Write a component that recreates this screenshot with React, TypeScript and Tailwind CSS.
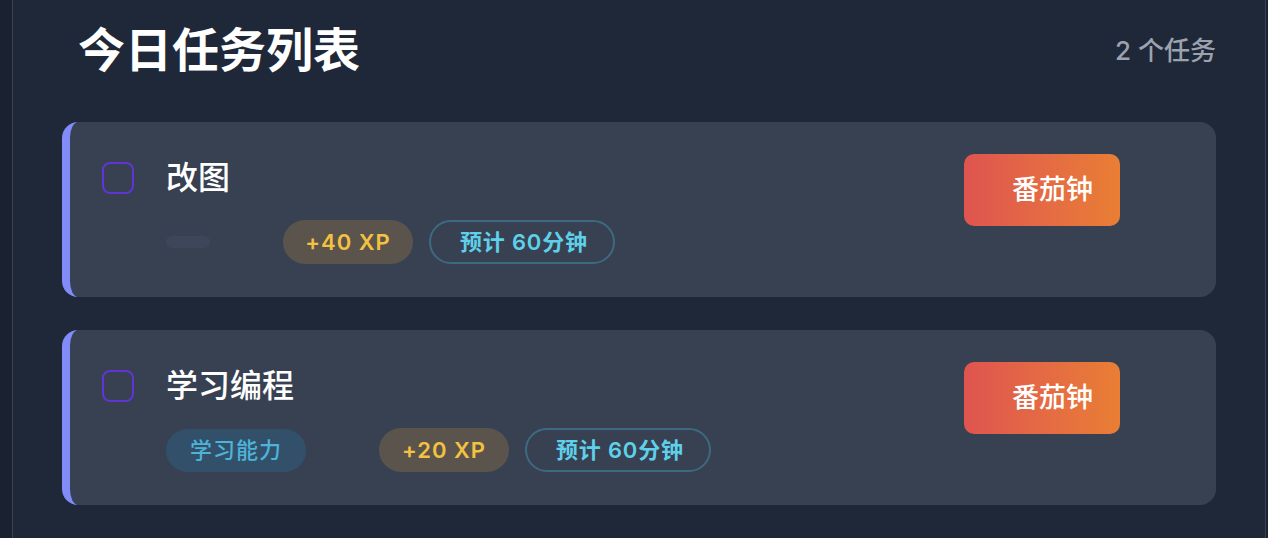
const font = "font-['Inter','Noto_Sans_CJK_SC',sans-serif]";

type Task = {
  title: string;
  category: string;
  xp: number;
  minutes: number;
};

const tasks: Task[] = [
  { title: "改图", category: "", xp: 40, minutes: 60 },
  { title: "学习编程", category: "学习能力", xp: 20, minutes: 60 },
];

function TaskCard({ task }: { task: Task }) {
  return (
    <div className="flex items-start rounded-2xl border-l-[8px] border-[#818cf8] bg-[#374151] pl-[32px] pr-[96px] pt-[32px] pb-[33px]">
      <div className="mt-[8px] h-[32px] w-[32px] shrink-0 rounded-[8px] border-2 border-[#6234d6]" />
      <div className="ml-[32px] flex flex-1 flex-col">
        <div className="h-[40px] pt-[4px] text-[32px] leading-[40px] font-medium text-white">{task.title}</div>
        <div className="mt-[26px] flex h-[44px] items-center">
          {task.category ? (
            <span className="flex h-[43px] w-[140px] items-center justify-center rounded-full bg-[#33506a] text-[22px] font-medium tracking-[1px] text-[#4eb3d8]">
              {task.category}
            </span>
          ) : (
            <span className="h-[12px] w-[44px] rounded-full bg-[#3e4759]" />
          )}
          <span className="ml-[73px] flex h-[44px] w-[130px] items-center justify-center rounded-full bg-[#5b544d] text-[22px] font-semibold tracking-[1px] text-[#f4c141]">
            +{task.xp} XP
          </span>
          <span className="ml-[16px] flex h-[44px] w-[186px] items-center rounded-full border-2 border-[#3d6a80] pl-[29px] text-[22px] font-semibold tracking-[0.8px] text-[#5fd0ea]">
            预计 {task.minutes}分钟
          </span>
        </div>
      </div>
      <button className="flex h-[72px] w-[156px] shrink-0 items-center rounded-[10px] bg-gradient-to-r from-[#df544f] to-[#e97e33] pl-[48px] text-[27px] font-medium text-white">
        番茄钟
      </button>
    </div>
  );
}

export default function App() {
  return (
    <div className={`min-h-screen bg-[#1a2131] ${font}`}>
      <div className="ml-[12px] mr-[2px] min-h-screen border-x border-[#3a4354] bg-[#1f2839] px-[49px] pt-[22px]">
        <div className="flex items-center justify-between pl-[16px]">
          <h1 className="text-[47px] leading-[56px] font-semibold text-white">今日任务列表</h1>
          <span className="text-[26px] font-medium text-[#9ca3af]">2 个任务</span>
        </div>
        <div className="mt-[44px] flex flex-col gap-[33px]">
          {tasks.map((t) => (
            <TaskCard key={t.title} task={t} />
          ))}
        </div>
      </div>
    </div>
  );
}
